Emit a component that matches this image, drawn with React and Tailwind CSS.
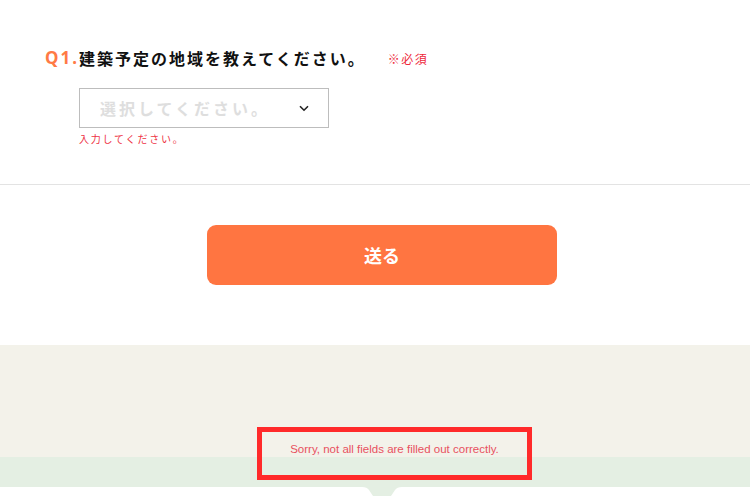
export default function App() {
  const jp = { fontFamily: '"Noto Sans CJK JP", "Noto Sans", sans-serif' };

  return (
    <div className="w-[750px] h-[496px] overflow-hidden bg-white relative" style={jp}>
      {/* question block */}
      <div className="h-[184px] pt-[46px]">
        <div className="flex items-center pl-[45px] h-[24px]">
          <span className="text-[17px] font-bold tracking-[2px] text-[#ff7a45]" style={{ fontFamily: '"Noto Sans", "Noto Sans CJK JP", sans-serif' }}>Q1.</span>
          <span className="text-[16px] font-bold tracking-[2px] text-[#111]">建築予定の地域を教えてください。</span>
          <span className="ml-[22px] text-[12px] tracking-[1.5px] text-[#ee2a3b] mt-[2px]">※必須</span>
        </div>
        <div className="ml-[79px] mt-[18px] w-[250px] h-[40px] border border-[#bdbdbd] flex items-center justify-between pl-[20px] pr-[19px]">
          <span className="text-[16px] font-bold tracking-[3px] text-[#dedede]">選択してください。</span>
          <svg width="10" height="7" viewBox="0 0 10 7" className="mt-[1px]">
            <path d="M1 1.2 L5 5.2 L9 1.2" fill="none" stroke="#222" strokeWidth="1.6" />
          </svg>
        </div>
        <div className="ml-[79px] mt-[3px] text-[10px] tracking-[1.8px] text-[#ee3344] leading-[16px]">入力してください。</div>
      </div>

      <div className="border-t border-[#e3e3e3]" />

      {/* submit */}
      <div className="h-[160px] flex justify-center pt-[40px] pl-[14px]">
        <button className="w-[350px] h-[60px] rounded-[9px] bg-[#ff7541] text-white text-[18px] font-bold">送る</button>
      </div>

      {/* footer bands */}
      <div className="h-[112px] bg-[#f3f2ea]" />
      <div className="h-[30px] bg-[#e4efe3]" />
      <div className="h-[20px] bg-white relative">
        <svg width="40" height="12" viewBox="0 0 40 12" className="absolute left-[362px] top-0">
          <path d="M0 0 Q5 0 7 3 L13 12 L27 12 L33 3 Q35 0 40 0 Z" fill="#e4efe3" />
        </svg>
      </div>

      {/* validation message overlay */}
      <div className="absolute left-[257px] top-[427px] w-[275px] h-[53px] border-[5px] border-[#ff2a2a] flex items-center justify-center">
        <span className="text-[11.5px] text-[#e8505e] -mt-[8px]" style={{ fontFamily: '"Liberation Sans", Arial, sans-serif' }}>
          Sorry, not all fields are filled out correctly.
        </span>
      </div>
    </div>
  );
}
